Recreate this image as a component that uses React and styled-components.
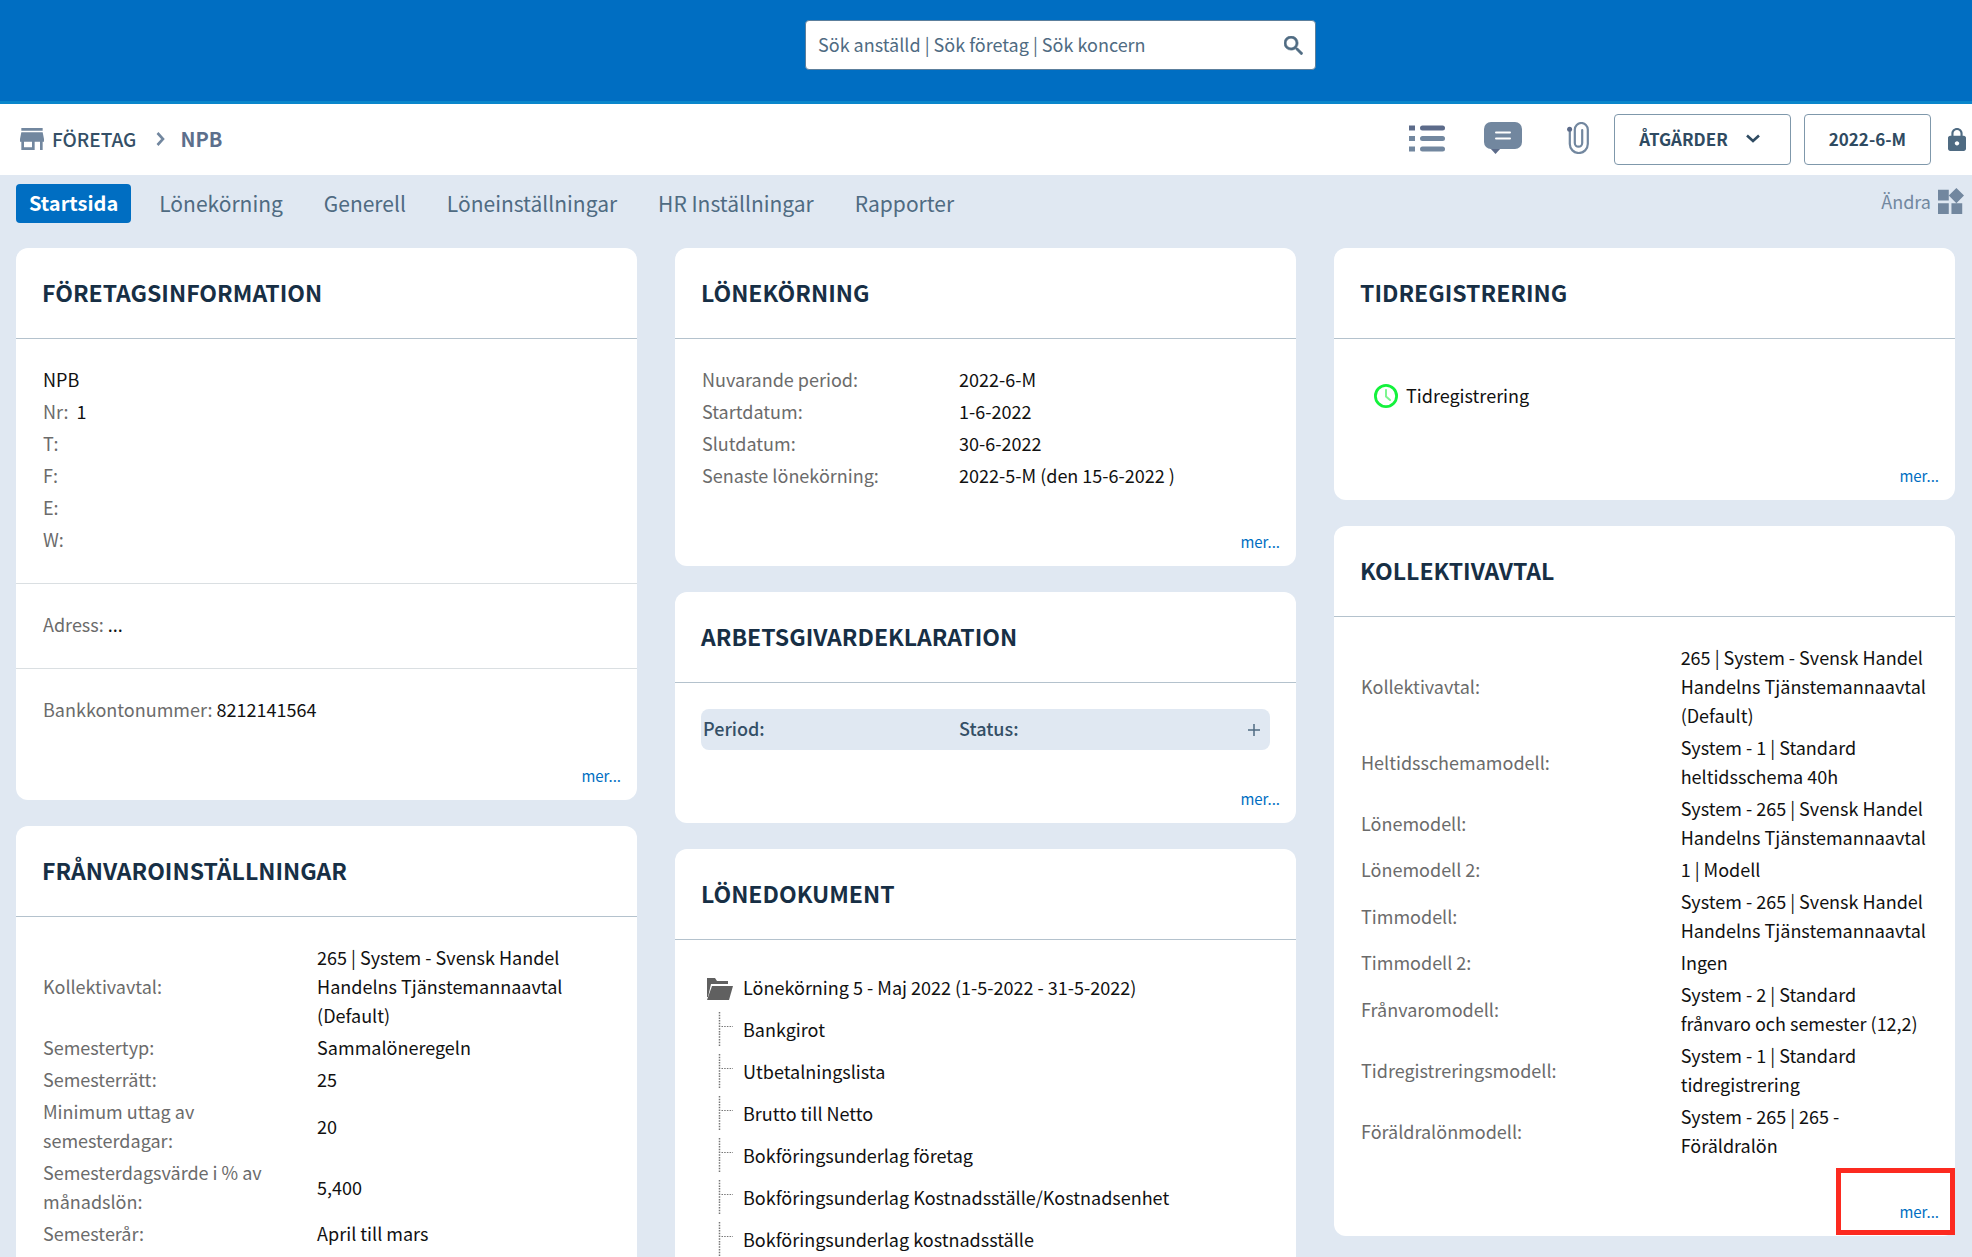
import React, { useState } from 'react'
import styled, { createGlobalStyle } from 'styled-components'

const GlobalStyle = createGlobalStyle`
    * {
        box-sizing: border-box;
    }
    body {
        margin: 0;
        background: #e0e8f2;
        color: #111;
        font-family: "Noto Sans CJK JP", "Noto Sans", sans-serif;
        font-size: 18px;
        line-height: 29px;
    }
    button, input {
        font-family: inherit;
    }
    a {
        color: inherit;
        text-decoration: none;
    }
`

const Page = styled.div`
    display: flex;
    flex-direction: column;
    height: 100vh;
    overflow: hidden;
`

const TopBar = styled.header`
    display: grid;
    grid-template-columns: 805fr 511fr 656fr;
    flex: none;
    padding: 20px 0 31px;
    background: #006ec2;
    border-bottom: 3px solid #0a86cb;
`

const SearchForm = styled.form`
    grid-column: 2;
    display: flex;
    align-items: center;
    height: 50px;
    padding: 0 12px;
    background: #fff;
    border: 1px solid #5c7f9c;
    border-radius: 4px;
`

const SearchInput = styled.input`
    flex: 1;
    min-width: 0;
    padding: 0 0 2px;
    border: 0;
    outline: 0;
    background: transparent;
    color: #4f6b82;
    font-size: 18px;
    &::placeholder {
        color: #4f6b82;
        opacity: 1;
    }
`

const IconButton = styled.button`
    display: flex;
    align-items: center;
    justify-content: center;
    padding: 0;
    border: 0;
    background: transparent;
    color: ${(props) => props.$color || '#72879f'};
    cursor: pointer;
`

const Toolbar = styled.div`
    display: flex;
    align-items: center;
    justify-content: space-between;
    flex: none;
    height: 71px;
    padding: 0 6px 0 20px;
    background: #fff;
`

const Breadcrumb = styled.nav`
    display: flex;
    align-items: center;
    padding-bottom: 2px;
    color: #72879f;
`

const Crumb = styled.a`
    margin: 0 20px 0 8px;
    color: #344f66;
    font-size: 19px;
    font-weight: 500;
`

const Current = styled.span`
    margin-left: 15px;
    color: #5c6f8c;
    font-size: 20px;
    font-weight: 700;
`

const Tools = styled.div`
    display: flex;
    align-items: center;
`

const ToolIcons = styled.div`
    display: flex;
    align-items: center;
    gap: 38px;
    margin-right: 25px;
    padding-bottom: 3px;
`

const OutlineButton = styled.button`
    display: flex;
    align-items: center;
    gap: 18px;
    height: 51px;
    margin-right: ${(props) => (props.$menu ? '13px' : '17px')};
    padding: 0 ${(props) => (props.$menu ? '30px' : '24px')} 2px 24px;
    background: #fff;
    border: 1px solid #7f98ab;
    border-radius: 4px;
    color: #2f4b62;
    font-size: 17px;
    font-weight: 700;
    cursor: pointer;
`

const NavBar = styled.nav`
    display: flex;
    justify-content: space-between;
    align-items: flex-start;
    flex: none;
    height: 73px;
    padding: 9px 8px 0 16px;
`

const Tabs = styled.div`
    display: flex;
    gap: 15px;
`

const Tab = styled.button`
    height: 39px;
    padding: 0 13px 2px;
    border: 0;
    border-radius: 4px;
    background: ${(props) => (props.$active ? '#006ec2' : 'transparent')};
    color: ${(props) => (props.$active ? '#fff' : '#4f6b82')};
    font-size: ${(props) => (props.$active ? '20px' : '21px')};
    font-weight: ${(props) => (props.$active ? 700 : 400)};
    cursor: pointer;
`

const Edit = styled.button`
    display: flex;
    align-items: center;
    gap: 7px;
    height: 34px;
    padding: 0;
    border: 0;
    background: transparent;
    color: #72879f;
    font-size: 18px;
    cursor: pointer;
`

const Columns = styled.main`
    display: grid;
    grid-template-columns: repeat(3, 1fr);
    gap: 38px;
    flex: 1;
    min-height: 0;
    padding: 0 17px 0 16px;
`

const Column = styled.div`
    display: flex;
    flex-direction: column;
    gap: 26px;
    min-width: 0;
`

const CardBox = styled.section`
    flex: ${(props) => (props.$open ? '1 0 auto' : 'none')};
    background: #fff;
    border-radius: ${(props) => (props.$open ? '12px 12px 0 0' : '12px')};
`

const CardTitle = styled.h2`
    display: flex;
    align-items: center;
    height: 91px;
    margin: 0;
    padding: 0 26px 2px;
    border-bottom: 1px solid #b4c2cd;
    color: #172f45;
    font-size: 23px;
    font-weight: 700;
`

const Section = styled.div`
    padding: 26px 26px 0;
    & + & {
        margin-top: 26px;
        border-top: 1px solid #dadfe2;
    }
`

const CardFooter = styled.div`
    position: relative;
    display: flex;
    justify-content: flex-end;
    align-items: flex-end;
    height: 73px;
    padding: 0 16px 14px;
`

const More = styled.a`
    color: #006ec2;
    font-size: 15px;
    line-height: 20px;
`

/* red frame on top of the footer corner */
const Marker = styled.div`
    position: absolute;
    right: 0;
    bottom: 1px;
    width: 119px;
    height: 67px;
    border: 5px solid #fc2a20;
    pointer-events: none;
`

const Info = styled.p`
    margin: 0;
    padding: 0 1px 3px;
`

const Label = styled.span`
    color: #6b6b6b;
`

const DataTable = styled.table`
    width: 100%;
    table-layout: fixed;
    border-collapse: collapse;
    th, td {
        padding: 0 1px 3px 2px;
        text-align: left;
        vertical-align: middle;
    }
    th {
        width: ${(props) => props.$labelWidth};
        padding: 0 16px 3px 1px;
        color: #6b6b6b;
        font-weight: 400;
    }
`

const PeriodBar = styled.div`
    display: grid;
    grid-template-columns: 45% 1fr auto;
    align-items: center;
    height: 41px;
    background: #e0e8f2;
    border-radius: 8px;
    color: #344f66;
    font-weight: 500;
    span {
        padding: 0 1px 2px 2px;
    }
    button {
        margin-right: 10px;
    }
`

const TimeLink = styled.a`
    display: flex;
    align-items: center;
    gap: 8px;
    padding: 16px 0 17px 14px;
`

const Tree = styled.ul`
    margin: 0;
    padding: 0 0 0 6px;
    list-style: none;
`

const TreeRow = styled.li`
    display: flex;
    align-items: center;
    gap: 10px;
    height: 42px;
`

const rowsAbsence = [
    ['Kollektivavtal:', '265 | System - Svensk Handel Handelns Tjänstemannaavtal (Default)'],
    ['Semestertyp:', 'Sammalöneregeln'],
    ['Semesterrätt:', '25'],
    ['Minimum uttag av semesterdagar:', '20'],
    ['Semesterdagsvärde i % av månadslön:', '5,400'],
    ['Semesterår:', 'April till mars'],
]

const rowsPayroll = [
    ['Nuvarande period:', '2022-6-M'],
    ['Startdatum:', '1-6-2022'],
    ['Slutdatum:', '30-6-2022'],
    ['Senaste lönekörning:', '2022-5-M (den 15-6-2022 )'],
]

const rowsAgreement = [
    ['Kollektivavtal:', '265 | System - Svensk Handel Handelns Tjänstemannaavtal (Default)'],
    ['Heltidsschemamodell:', 'System - 1 | Standard heltidsschema 40h'],
    ['Lönemodell:', 'System - 265 | Svensk Handel Handelns Tjänstemannaavtal'],
    ['Lönemodell 2:', '1 | Modell'],
    ['Timmodell:', 'System - 265 | Svensk Handel Handelns Tjänstemannaavtal'],
    ['Timmodell 2:', 'Ingen'],
    ['Frånvaromodell:', 'System - 2 | Standard frånvaro och semester (12,2)'],
    ['Tidregistreringsmodell:', 'System - 1 | Standard tidregistrering'],
    ['Föräldralönmodell:', 'System - 265 | 265 - Föräldralön'],
]

const documents = [
    'Bankgirot',
    'Utbetalningslista',
    'Brutto till Netto',
    'Bokföringsunderlag företag',
    'Bokföringsunderlag Kostnadsställe/Kostnadsenhet',
    'Bokföringsunderlag kostnadsställe',
]

const tabs = ['Startsida', 'Lönekörning', 'Generell', 'Löneinställningar', 'HR Inställningar', 'Rapporter']

function SearchIcon() {
    return (
        <svg width="19" height="19" viewBox="3 3 17.5 17.5" fill="currentColor" stroke="currentColor" strokeWidth="0.6">
            <path d="M15.5 14h-.79l-.28-.27A6.47 6.47 0 0 0 16 9.5 6.5 6.5 0 1 0 9.5 16c1.61 0 3.09-.59 4.23-1.57l.27.28v.79l5 4.99L20.49 19l-4.99-5zm-6 0C7.01 14 5 11.99 5 9.5S7.01 5 9.5 5 14 7.01 14 9.5 11.99 14 9.5 14z" />
        </svg>
    )
}

function StoreIcon() {
    return (
        <svg width="24" height="22" viewBox="3 4 18 16" preserveAspectRatio="none" fill="currentColor">
            <path d="M20 4H4v2h16V4zm1 10v-2l-1-5H4l-1 5v2h1v6h10v-6h4v6h2v-6h1zm-9 4H6v-4h6v4z" />
        </svg>
    )
}

function Chevron({ down }) {
    return (
        <svg width={down ? 14 : 9} height={down ? 9 : 14} viewBox={down ? '0 0 14 9' : '0 0 9 14'} fill="none" stroke="currentColor" strokeWidth="2.6">
            <path d={down ? 'M1 1.5l6 5.5 6-5.5' : 'M1.5 1l5.5 6-5.5 6'} />
        </svg>
    )
}

function ListIcon() {
    return (
        <svg width="37" height="27" viewBox="0 0 37 27">
            <path fill="#5c6b8a" d="M0 .5h6v5H0z" />
            <path fill="#72879f" d="M0 11h6v5H0zM0 21.5h6v5H0z" />
            <rect x="11" y="0.5" width="25" height="5" rx="2.5" fill="#5c6b8a" />
            <rect x="11" y="11" width="25" height="5" rx="2.5" fill="#72879f" />
            <rect x="11" y="21.5" width="25" height="5" rx="2.5" fill="#72879f" />
        </svg>
    )
}

function CommentIcon() {
    return (
        <svg width="38" height="32" viewBox="0 0 38 32">
            <path fill="#5c6b8a" d="M6 26h11l-5.5 6z" />
            <rect width="38" height="27" rx="7" fill="#72879f" />
            <path d="M12 10.5h14M12 16.5h14" stroke="#fff" strokeWidth="2" strokeLinecap="round" />
        </svg>
    )
}

function ClipIcon() {
    return (
        <svg width="29" height="32" viewBox="-7 0 29 32" fill="none" stroke="#72879f" strokeWidth="2.2" strokeLinecap="round">
            <path d="M2.8 7.5V22a9 9 0 0 0 18 0V7.5a6.5 6.5 0 0 0-13 0V21a3.7 3.7 0 0 0 7.4 0V8" />
            <circle cx="2.6" cy="7.3" r="2.5" fill="#5c6b8a" stroke="none" />
        </svg>
    )
}

function LockIcon() {
    return (
        <svg width="18" height="23" viewBox="4 1 16 21" preserveAspectRatio="none" fill="currentColor">
            <path d="M18 8h-1V6c0-2.76-2.24-5-5-5S7 3.24 7 6v2H6c-1.1 0-2 .9-2 2v10c0 1.1.9 2 2 2h12c1.1 0 2-.9 2-2V10c0-1.1-.9-2-2-2zm-6 9c-1.1 0-2-.9-2-2s.9-2 2-2 2 .9 2 2-.9 2-2 2zm3.1-9H8.9V6c0-1.71 1.39-3.1 3.1-3.1s3.1 1.39 3.1 3.1v2z" />
        </svg>
    )
}

function WidgetsIcon() {
    return (
        <svg width="26" height="26" viewBox="3 1.69 19.32 19.31" fill="currentColor">
            <path d="M13 13v8h8v-8h-8zM3 21h8v-8H3v8zM3 3v8h8V3H3zm13.66-1.31L11 7.34 16.66 13l5.66-5.66-5.66-5.65z" />
        </svg>
    )
}

function ClockIcon() {
    return (
        <svg width="24" height="24" viewBox="0 0 24 24" fill="none" strokeLinecap="round">
            <circle cx="12" cy="12" r="10.6" stroke="#14f23c" strokeWidth="2.8" />
            <path d="M12 6v6.5l4 3.5" stroke="#7df58f" strokeWidth="2" />
        </svg>
    )
}

function FolderIcon() {
    return (
        <svg width="26" height="26" viewBox="0 -4 26 26" fill="#606060">
            <path d="M0 0h8l2 3h11v3H4L1 19H0z" />
            <path d="M5 8h21l-4 14H0z" />
        </svg>
    )
}

function Branch() {
    return (
        <svg width="26" height="34" viewBox="0 0 26 34" stroke="#777" strokeDasharray="1.5 1.2">
            <path d="M12.5 0v34" strokeWidth="1.5" />
            <path d="M14.5 14.5h12" />
        </svg>
    )
}

function Plus() {
    return (
        <svg width="12" height="12" viewBox="0 0 12 12" stroke="currentColor" strokeWidth="1.5">
            <path d="M6 0v12M0 6h12" />
        </svg>
    )
}

function Card({ title, open, marked, children }) {
    return (
        <CardBox $open={open}>
            <CardTitle>{title}</CardTitle>
            {children}
            {!open && (
                <CardFooter>
                    <More href="#">mer...</More>
                    {marked && <Marker />}
                </CardFooter>
            )}
        </CardBox>
    )
}

function Rows({ rows, labelWidth }) {
    return (
        <DataTable $labelWidth={labelWidth}>
            <tbody>
                {rows.map(([label, value]) => (
                    <tr key={label}>
                        <th scope="row">{label}</th>
                        <td>{value}</td>
                    </tr>
                ))}
            </tbody>
        </DataTable>
    )
}

export default function App() {
    const [active, setActive] = useState('Startsida')
    return (
        <Page>
            <GlobalStyle />
            <TopBar>
                <SearchForm role="search" onSubmit={(e) => e.preventDefault()}>
                    <SearchInput aria-label="Sök" placeholder="Sök anställd | Sök företag | Sök koncern" />
                    <IconButton type="submit" aria-label="Sök" $color="#4f6b82"><SearchIcon /></IconButton>
                </SearchForm>
            </TopBar>
            <Toolbar>
                <Breadcrumb>
                    <StoreIcon />
                    <Crumb href="#">FÖRETAG</Crumb>
                    <Chevron />
                    <Current>NPB</Current>
                </Breadcrumb>
                <Tools>
                    <ToolIcons>
                        <IconButton aria-label="Lista"><ListIcon /></IconButton>
                        <IconButton aria-label="Kommentarer"><CommentIcon /></IconButton>
                        <IconButton aria-label="Bilagor"><ClipIcon /></IconButton>
                    </ToolIcons>
                    <OutlineButton $menu>ÅTGÄRDER <Chevron down /></OutlineButton>
                    <OutlineButton>2022-6-M</OutlineButton>
                    <IconButton aria-label="Lås" $color="#4f6b82"><LockIcon /></IconButton>
                </Tools>
            </Toolbar>
            <NavBar>
                <Tabs>
                    {tabs.map((tab) => (
                        <Tab key={tab} $active={tab === active} onClick={() => setActive(tab)}>{tab}</Tab>
                    ))}
                </Tabs>
                <Edit>Ändra <WidgetsIcon /></Edit>
            </NavBar>
            <Columns>
                <Column>
                    <Card title="FÖRETAGSINFORMATION">
                        <Section>
                            <Info>NPB</Info>
                            <Info><Label>Nr:</Label>&nbsp; 1</Info>
                            <Info><Label>T:</Label></Info>
                            <Info><Label>F:</Label></Info>
                            <Info><Label>E:</Label></Info>
                            <Info><Label>W:</Label></Info>
                        </Section>
                        <Section>
                            <Info><Label>Adress:</Label> ...</Info>
                        </Section>
                        <Section>
                            <Info><Label>Bankkontonummer:</Label> 8212141564</Info>
                        </Section>
                    </Card>
                    <Card title="FRÅNVAROINSTÄLLNINGAR" open>
                        <Section><Rows rows={rowsAbsence} labelWidth="48%" /></Section>
                    </Card>
                </Column>
                <Column>
                    <Card title="LÖNEKÖRNING">
                        <Section><Rows rows={rowsPayroll} labelWidth="45%" /></Section>
                    </Card>
                    <Card title="ARBETSGIVARDEKLARATION">
                        <Section>
                            <PeriodBar>
                                <span>Period:</span>
                                <span>Status:</span>
                                <IconButton aria-label="Lägg till" $color="#4f6b82"><Plus /></IconButton>
                            </PeriodBar>
                        </Section>
                    </Card>
                    <Card title="LÖNEDOKUMENT" open>
                        <Section>
                            <Tree>
                                <TreeRow><FolderIcon />Lönekörning 5 - Maj 2022 (1-5-2022 - 31-5-2022)</TreeRow>
                                {documents.map((name) => (
                                    <TreeRow key={name}><Branch /><a href="#">{name}</a></TreeRow>
                                ))}
                            </Tree>
                        </Section>
                    </Card>
                </Column>
                <Column>
                    <Card title="TIDREGISTRERING">
                        <Section>
                            <TimeLink href="#"><ClockIcon />Tidregistrering</TimeLink>
                        </Section>
                    </Card>
                    <Card title="KOLLEKTIVAVTAL" marked>
                        <Section><Rows rows={rowsAgreement} labelWidth="56%" /></Section>
                    </Card>
                </Column>
            </Columns>
        </Page>
    )
}
